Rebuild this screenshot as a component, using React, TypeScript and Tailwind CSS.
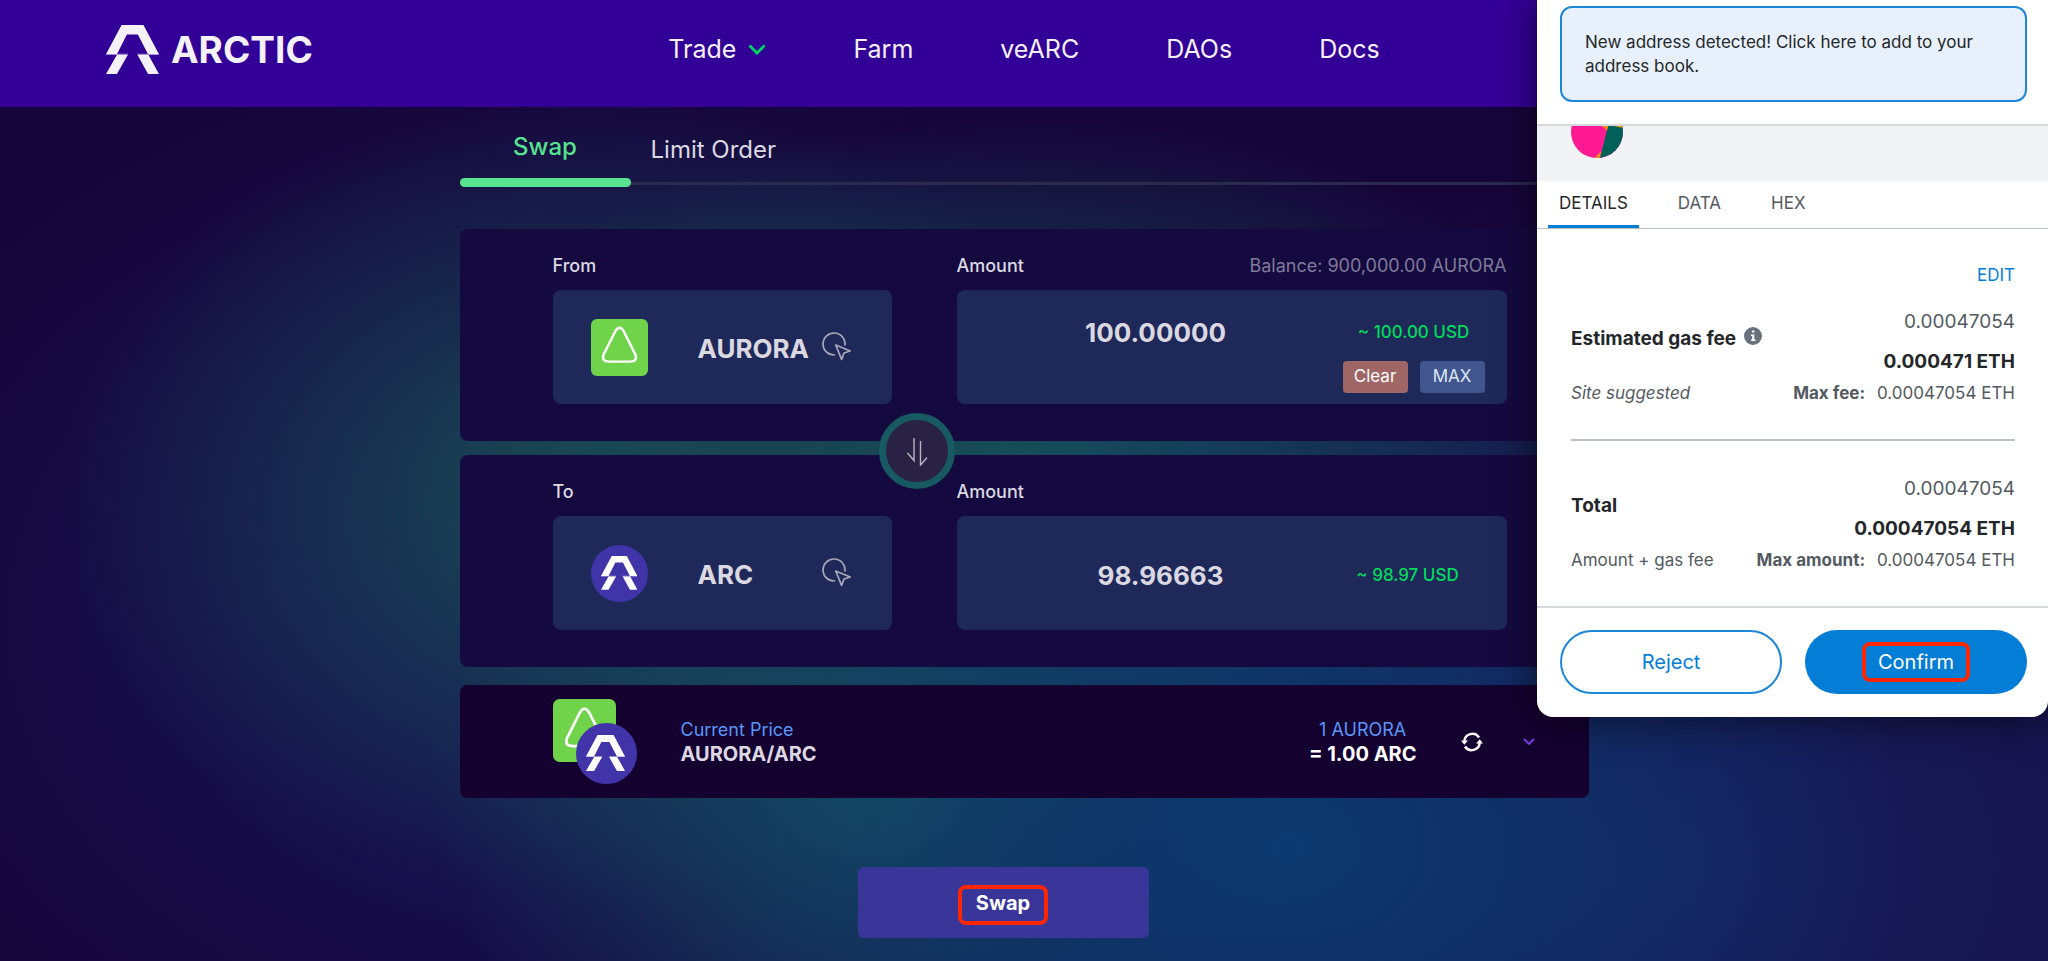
import { useState } from "react";

const NavLinks = ["Farm", "veARC", "DAOs", "Docs"];

const ArcticMark = ({ className }: { className?: string }) => (
  <svg viewBox="0 0 160 148" className={className} fill="currentColor" aria-hidden="true">
    <path d="M47 0H113L160 88H127L96 29H63L33 88H0Z" />
    <path d="M33 90H66L33 148H0Z" />
    <path d="M95 90H128L160 148H127Z" />
    <path d="M0 87H66V90H0ZM95 87H160V90H95Z" opacity="0.6" />
  </svg>
);

const AuroraIcon = ({ className }: { className?: string }) => (
  <svg viewBox="0 0 57 57" className={className} aria-hidden="true">
    <rect width="57" height="57" rx="6" fill="#70d44b" />
    <path
      d="M24.3 12.2 12.6 35.6Q10 42.6 18 42.6H39Q47 42.6 44.4 35.6L32.7 12.2Q28.5 5.4 24.3 12.2Z"
      fill="none"
      stroke="#fff"
      strokeWidth="2.4"
    />
  </svg>
);

const ArcIcon = ({ className }: { className?: string }) => (
  <span className={`flex items-center justify-center rounded-full bg-[#4134a8] text-white ${className}`}>
    <ArcticMark className="w-[64%]" />
  </span>
);

const PickIcon = () => (
  <svg viewBox="0 0 30 30" className="w-[30px] h-[30px]" fill="none" stroke="#aca7b8" strokeWidth="1.7" strokeLinejoin="round" strokeLinecap="round" aria-hidden="true">
    <path d="M23 13A11 11 0 1 0 12.5 23" />
    <path d="M13.7 13 28.2 19 22 21 19.6 27.4Z" />
  </svg>
);

const FlipIcon = () => (
  <svg viewBox="0 0 24 30" className="w-6 h-[30px]" fill="none" stroke="#b9b4c0" strokeWidth="1.4" aria-hidden="true">
    <path d="M9 2V24.500L2.500 17" />
    <path d="M15.500 5V29L22 21.500" />
  </svg>
);

const Chevron = ({ className }: { className?: string }) => (
  <svg viewBox="0 0 18 11" className={className} fill="none" stroke="currentColor" strokeWidth="2.8" aria-hidden="true">
    <path d="M1.500 1.500 9 9 16.500 1.500" />
  </svg>
);

const RefreshIcon = () => (
  <svg viewBox="0 0 22 20" className="w-[22px] h-5" fill="none" stroke="#fff" strokeWidth="2.5" aria-hidden="true">
    <path d="M3.300 9.500A8 8 0 0 1 18 5.500" />
    <path d="M18.700 10.500A8 8 0 0 1 4 14.500" />
    <path d="M0 8.500 3.300 12.800 7 8.500ZM15 11.500 18.700 7.200 22 11.500Z" fill="#fff" stroke="none" />
  </svg>
);

const Jazzicon = () => (
  <svg viewBox="0 0 52 32" className="w-[52px] h-8" aria-hidden="true">
    <clipPath id="avatar">
      <circle cx="26" cy="6" r="26" />
    </clipPath>
    <g clipPath="url(#avatar)">
      <rect width="52" height="32" fill="#ff1a94" />
      <path d="M37 0H52V32H29L31 24Z" fill="#02605a" />
      <path d="M31 0H37L36 4.500ZM43 0H52V2ZM23.500 32 30.500 25 28.500 32Z" fill="#f98f0c" />
    </g>
  </svg>
);

const TokenPicker = ({ label, symbol, icon }: { label: string; symbol: string; icon: React.ReactNode }) => {
  const id = `token-${label}`;
  return (
    <div className="w-[339px] shrink-0">
      <label htmlFor={id} className="block h-6 mb-3 text-[18px] leading-6 font-medium">{label}</label>
      <button id={id} className="w-full h-[114px] pl-[38px] pr-10 flex items-center rounded-lg bg-[#1e2959]">
        {icon}
        <span className="ml-[50px] pt-[2px] flex-1 text-left text-[26px] font-bold">{symbol}</span>
        <PickIcon />
      </button>
    </div>
  );
};

const WalletRow = ({ title, sub, rough, exact, maxLabel, info }: {
  title: string;
  sub: React.ReactNode;
  rough: string;
  exact: string;
  maxLabel: string;
  info?: boolean;
}) => (
  <div className="text-[17px] leading-6 text-[#535a61]">
    <div className="flex justify-between text-[19px]">
      <div className="pt-[17px] flex gap-2">
        <h3 className="font-bold text-[#24272a]">{title}</h3>
        {info && (
          <svg viewBox="0 0 18 18" className="w-[18px] h-[18px]" aria-hidden="true">
            <circle cx="9" cy="9" r="9" fill="#6a737d" />
            <path d="M8 3.500H10.300V5.500H8ZM7 7.500H10.300V12.500H11.500V14H7V12.500H8.200V9H7Z" fill="#fff" />
          </svg>
        )}
      </div>
      <div className="flex flex-col items-end gap-4">
        <span>{rough}</span>
        <span className="font-bold text-[#24272a]">{exact}</span>
      </div>
    </div>
    <div className="mt-[7px] flex justify-between">
      <span>{sub}</span>
      <span className="flex gap-3">
        <b>{maxLabel}</b>
        <span>0.00047054 ETH</span>
      </span>
    </div>
  </div>
);

const WalletPopup = () => {
  const [tab, setTab] = useState("DETAILS");
  return (
    <aside className="absolute top-0 right-0 w-[511px] pt-[6px] rounded-b-2xl bg-white text-[#24272a] shadow-[0_0_40px_rgba(0,0,0,0.6)]">
      <div className="ml-[23px] mr-[21px] h-24 px-[23px] flex items-center rounded-xl border-2 border-[#1c86d9] bg-[#e8f1fb]">
        <p className="text-[17px] leading-6">New address detected! Click here to add to your address book.</p>
      </div>

      <div className="mt-[22px] h-[57px] pl-[34px] border-t-2 border-[#d6d9dc] bg-[#f2f3f4]">
        <Jazzicon />
      </div>

      <div className="h-12 pl-[11px] flex items-stretch gap-7 border-b border-[#bbc0c5] text-[17px]">
        {["DETAILS", "DATA", "HEX"].map((name) => (
          <button
            key={name}
            onClick={() => setTab(name)}
            className={tab === name ? "px-[11px] pt-[2px] border-b-3 border-[#037dd6]" : "px-[11px] pt-[2px] border-b-3 border-transparent text-[#535a61]"}
          >
            {name}
          </button>
        ))}
      </div>

      <div className="pl-[34px] pr-[33px] pt-[34px]">
        <button className="block ml-auto text-[17px] leading-6 text-[#037dd6]">EDIT</button>
        <div className="mt-[23px] pb-[34px] border-b-2 border-[#bbc0c5]">
          <WalletRow title="Estimated gas fee" info sub={<i>Site suggested</i>} rough="0.00047054" exact="0.000471 ETH" maxLabel="Max fee:" />
        </div>
        <div className="pt-9 pb-[34px]">
          <WalletRow title="Total" sub="Amount + gas fee" rough="0.00047054" exact="0.00047054 ETH" maxLabel="Max amount:" />
        </div>
      </div>

      <div className="pl-[23px] pr-[21px] pt-[22px] pb-[23px] grid grid-cols-2 gap-[23px] border-t-2 border-[#d6d9dc] text-[20px]">
        <button className="h-16 rounded-full border-2 border-[#1c86d9] text-[#037dd6]">Reject</button>
        <button className="h-16 flex items-center justify-center rounded-full bg-[#037dd6] text-white">
          <span className="w-[108px] h-10 flex items-center justify-center rounded-lg border-4 border-[#ff2600]">Confirm</span>
        </button>
      </div>
    </aside>
  );
};

const App = () => {
  const [amount, setAmount] = useState("100.00000");

  return (
    <div className="relative min-h-screen overflow-hidden font-['Inter',sans-serif] text-[#dcd8e2] bg-[#16053a] bg-[radial-gradient(ellipse_30%_50%_at_63%_88%,#0c3a70_0%,transparent_100%),radial-gradient(ellipse_22%_36%_at_43%_83%,#154a5e_0%,transparent_100%),radial-gradient(ellipse_26%_42%_at_29%_52%,#194a53_0%,transparent_100%),radial-gradient(ellipse_30%_38%_at_50%_50%,#16545a_0%,transparent_100%),radial-gradient(ellipse_50%_70%_at_80%_90%,#17205f_0%,transparent_100%),radial-gradient(ellipse_38%_60%_at_28%_65%,#17185a_0%,transparent_100%)]">
      <header className="h-[107px] pb-2 grid grid-cols-[1fr_auto_1fr] items-center bg-[#330097] text-[#f4f2f8]">
        <a href="#" className="ml-[106px] flex items-center gap-3">
          <ArcticMark className="w-[53px]" />
          <span className="text-[37px] leading-none font-bold">ARCTIC</span>
        </a>
        <nav className="flex items-center gap-[87px] text-[25px]">
          <button className="flex items-center gap-3">
            Trade
            <Chevron className="w-[18px] text-[#00d95f]" />
          </button>
          {NavLinks.map((link) => (
            <a key={link} href="#">{link}</a>
          ))}
        </nav>
      </header>

      <main className="max-w-[1129px] mx-auto">
        {/* Tabs */}
        <div className="relative h-20 flex items-stretch">
          <div className="absolute inset-x-0 bottom-[2px] h-[3px] bg-[#2a2b4f]"></div>
          <button className="relative w-[171px] text-[24px] font-medium text-[#57e38f]">
            Swap
            <span className="absolute inset-x-0 bottom-0 h-[9px] rounded-full bg-[#57e38f]"></span>
          </button>
          <button className="relative pl-5 pt-[6px] text-[24px]">Limit Order</button>
        </div>

        {/* From */}
        <section className="relative mt-[42px] pt-[25px] pb-[37px] pl-[93px] pr-[82px] flex gap-[65px] rounded-lg bg-[#140a40]">
          <TokenPicker label="From" symbol="AURORA" icon={<AuroraIcon className="w-[57px] h-[57px]" />} />
          <div className="flex-1 min-w-0">
            <div className="h-6 mb-3 flex justify-between text-[18px] leading-6">
              <label htmlFor="amount-in" className="font-medium">Amount</label>
              <span className="text-[#81799a]">Balance: 900,000.00 AURORA</span>
            </div>
            <div className="h-[114px] flex rounded-lg bg-[#1e2959]">
              <input
                id="amount-in"
                value={amount}
                onChange={(e) => setAmount(e.target.value)}
                className="flex-1 min-w-0 h-[84px] pl-3 bg-transparent text-center text-[26px] font-bold outline-none"
              />
              <div className="w-[142px] mr-[22px] pt-[30px]">
                <p className="text-center text-[17px] leading-6 font-medium text-[#00db5b]">~ 100.00 USD</p>
                <div className="mt-[17px] flex gap-3 text-[17px] text-white">
                  <button onClick={() => setAmount("")} className="flex-1 h-8 rounded bg-[#a06666]">Clear</button>
                  <button onClick={() => setAmount("900000.00000")} className="flex-1 h-8 rounded bg-[#41568e] text-[#dde6f8]">MAX</button>
                </div>
              </div>
            </div>
          </div>
          <button aria-label="Switch tokens" className="absolute z-10 left-[419px] -bottom-12 w-[76px] h-[76px] flex items-center justify-center rounded-full border-[7px] border-[#175a62] bg-[#2a2244]">
            <FlipIcon />
          </button>
        </section>

        {/* To */}
        <section className="mt-[14px] pt-[25px] pb-[37px] pl-[93px] pr-[82px] flex gap-[65px] rounded-lg bg-[#140a40]">
          <TokenPicker label="To" symbol="ARC" icon={<ArcIcon className="w-[57px] h-[57px]" />} />
          <div className="flex-1 min-w-0">
            <label htmlFor="amount-out" className="block h-6 mb-3 text-[18px] leading-6 font-medium">Amount</label>
            <div className="h-[114px] pt-1 flex items-center rounded-lg bg-[#1e2959]">
              <input id="amount-out" readOnly value="98.96663" className="flex-1 min-w-0 h-[84px] pl-7 bg-transparent text-center text-[26px] font-bold outline-none" />
              <p className="w-[142px] mr-7 text-center text-[17px] leading-6 font-medium text-[#00db5b]">~ 98.97 USD</p>
            </div>
          </div>
        </section>

        {/* Price */}
        <section className="mt-[18px] h-[113px] pl-[93px] pr-[54px] flex items-center rounded-lg bg-[#140130]">
          <div className="relative w-[84px] h-[85px]">
            <AuroraIcon className="w-[63px] h-[63px]" />
            <ArcIcon className="absolute right-0 bottom-0 w-[61px] h-[61px]" />
          </div>
          <div className="ml-11 text-[18px] leading-6">
            <p className="text-[#5a96f7]">Current Price</p>
            <p className="text-[20px] font-bold">AURORA/ARC</p>
          </div>
          <div className="ml-auto text-center text-[18px] leading-6">
            <p className="text-[#5a96f7]">1 AURORA</p>
            <p className="text-[20px] font-bold text-white">= 1.00 ARC</p>
          </div>
          <button aria-label="Refresh price" className="ml-11">
            <RefreshIcon />
          </button>
          <button aria-label="Show details" className="ml-10">
            <Chevron className="w-3 text-[#7c3aed]" />
          </button>
        </section>

        <div className="mt-[69px] pr-[42px] flex justify-center">
          <button className="w-[291px] h-[71px] pt-1 flex items-center justify-center rounded-md bg-[#3a3699] text-white">
            <span className="w-[90px] h-10 pb-1 flex items-center justify-center rounded-lg border-4 border-[#ff2600] text-[20px] font-bold">Swap</span>
          </button>
        </div>
      </main>

      <WalletPopup />
    </div>
  );
};

export default App;
